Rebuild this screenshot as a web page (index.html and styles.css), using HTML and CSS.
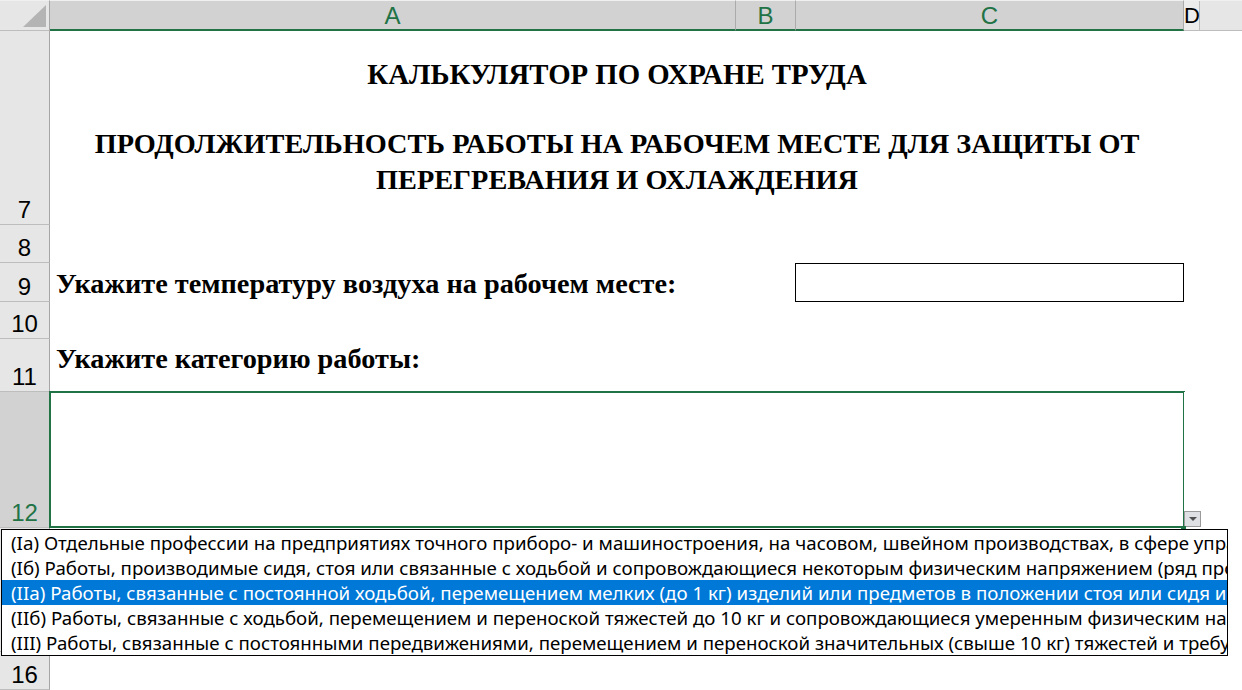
FILE: index.html
```html
<!DOCTYPE html>
<html lang="ru">
<head>
<meta charset="utf-8">
<title>Калькулятор по охране труда</title>
<link rel="stylesheet" href="styles.css">
</head>
<body>
<div class="sheet">
  <div class="hdr corner"><span class="corner-tri"></span></div>
  <div class="hdr col sel">A</div>
  <div class="hdr col sel">B</div>
  <div class="hdr col sel">C</div>
  <div class="hdr col d">D</div>
  <div class="hdr rest"></div>

  <div class="rh">7</div>
  <div class="cell span3 title-cell">
    <div class="title">КАЛЬКУЛЯТОР ПО ОХРАНЕ ТРУДА</div>
    <div class="subtitle">ПРОДОЛЖИТЕЛЬНОСТЬ РАБОТЫ НА РАБОЧЕМ МЕСТЕ ДЛЯ ЗАЩИТЫ ОТ<br>ПЕРЕГРЕВАНИЯ И ОХЛАЖДЕНИЯ</div>
  </div>
  <div class="cell span2"></div>

  <div class="rh">8</div>
  <div class="cell span5"></div>

  <div class="rh">9</div>
  <div class="cell span2 label label-9">Укажите температуру воздуха на рабочем месте:</div>
  <div class="cell input-cell"><div class="input-box"></div></div>
  <div class="cell span2"></div>

  <div class="rh">10</div>
  <div class="cell span5"></div>

  <div class="rh">11</div>
  <div class="cell span3 label label-11">Укажите категорию работы:</div>
  <div class="cell span2"></div>

  <div class="rh rh-sel">12</div>
  <div class="cell span3 selected"></div>
  <div class="cell span2"></div>

  <div class="rh"></div>
  <div class="cell span5"></div>

  <div class="rh">16</div>
  <div class="cell span5"></div>

  <div class="dd-btn"><span class="dd-tri"></span></div>
  <div class="fill-handle"></div>

  <div class="dd-list">
    <div class="dd-item">(Ia) Отдельные профессии на предприятиях точного приборо- и машиностроения, на часовом, швейном производствах, в сфере управления и т. п.</div>
    <div class="dd-item">(Iб) Работы, производимые сидя, стоя или связанные с ходьбой и сопровождающиеся некоторым физическим напряжением (ряд профессий в полиграфической промышленности)</div>
    <div class="dd-item active">(IIa) Работы, связанные с постоянной ходьбой, перемещением мелких (до 1 кг) изделий или предметов в положении стоя или сидя и требующие определённого физического напряжения</div>
    <div class="dd-item">(IIб) Работы, связанные с ходьбой, перемещением и переноской тяжестей до 10 кг и сопровождающиеся умеренным физическим напряжением</div>
    <div class="dd-item">(III) Работы, связанные с постоянными передвижениями, перемещением и переноской значительных (свыше 10 кг) тяжестей и требующие больших физических усилий</div>
  </div>
</div>
</body>
</html>
```

FILE: styles.css
```css
* { box-sizing: border-box; }
html, body { margin: 0; padding: 0; background: #fff; overflow: hidden; }

.sheet {
  position: relative;
  width: 1242px;
  height: 690px;
  display: grid;
  grid-template-columns: 50px 686px 60px 388px 20px 38px;
  grid-template-rows: 31px 194px 38px 39px 37px 53px 136px 124px 38px;
  font-family: "Liberation Sans", Arial, sans-serif;
}

.hdr {
  background: #e6e6e6;
  border-bottom: 1px solid #bdbdbd;
  border-right: 1px solid #bdbdbd;
  display: flex;
  align-items: center;
  justify-content: center;
  font-size: 24px;
  color: #000;
  border-top: 1px solid #f0f0f0;
}
.hdr.corner {
  position: relative;
  border-right: 1px solid #a6a6a6;
}
.corner-tri {
  position: absolute;
  right: 3px;
  bottom: 3px;
  width: 0;
  height: 0;
  border-left: 23px solid transparent;
  border-bottom: 22px solid #b4b4b4;
}
.hdr.sel {
  background: #d2d2d2;
  color: #217346;
  border-bottom: 2px solid #217346;
  border-right: 1px solid #ababab;
  padding-top: 1px;
}
.hdr.d {
  background: #ececec;
  border-right: none;
  box-shadow: inset -4px 0 0 #e6e6e6, inset -5px 0 0 #bdbdbd;
  justify-content: flex-start;
  font-size: 22px;
  padding-left: 0;
}
.hdr.rest { border-right: none; }

.rh {
  background: #e6e6e6;
  border-bottom: 1px solid #bdbdbd;
  border-right: 1px solid #a6a6a6;
  display: flex;
  align-items: flex-end;
  justify-content: center;
  font-size: 24px;
  line-height: 1;
  padding-bottom: 2px;
  color: #000;
}
.rh-sel {
  background: #d2d2d2;
  color: #217346;
}

.cell { background: #fff; }
.span2 { grid-column: span 2; }
.span3 { grid-column: span 3; }
.span5 { grid-column: span 5; }

.title-cell {
  text-align: center;
  font-family: "Liberation Serif", "Times New Roman", serif;
  font-weight: bold;
  color: #000;
  padding-top: 25px;
}
.title {
  font-size: 28.8px;
  line-height: 36px;
}
.subtitle {
  font-size: 28.3px;
  line-height: 36px;
  margin-top: 34px;
}

.label {
  font-family: "Liberation Serif", "Times New Roman", serif;
  font-weight: bold;
  font-size: 28.3px;
  color: #000;
  padding-left: 6px;
  white-space: nowrap;
}
.label-9 {
  display: flex;
  align-items: center;
  padding-top: 3px;
}
.label-11 {
  padding-top: 4px;
  line-height: 32px;
}

.input-cell { padding: 0 1px 1px 0; }
.input-box {
  height: 39px;
  width: 389px;
  margin-left: -1px;
  border: 1px solid #000;
}

.selected {
  border: 2px solid #217346;
  margin: -1px -1px 0 -1px;
}

.dd-btn {
  position: absolute;
  left: 1184px;
  top: 511px;
  width: 17px;
  height: 16px;
  background: #dfe0e3;
  border: 1px solid #9a9a9a;
  display: flex;
  align-items: center;
  justify-content: center;
}
.dd-tri {
  width: 0;
  height: 0;
  border-left: 4px solid transparent;
  border-right: 4px solid transparent;
  border-top: 4px solid #505050;
}
.fill-handle {
  position: absolute;
  left: 1181px;
  top: 526px;
  width: 5px;
  height: 3px;
  background: #217346;
}

.dd-list {
  position: absolute;
  left: 1px;
  top: 529px;
  width: 1227px;
  height: 127px;
  background: #fff;
  border: 1px solid #000;
  overflow: hidden;
  font-family: "Noto Sans", "Open Sans", sans-serif;
  font-size: 18.7px;
  color: #000;
}
.dd-item {
  height: 25px;
  line-height: 25px;
  padding-left: 9px;
  white-space: nowrap;
}
.dd-item.active {
  background: #0078d7;
  color: #fff;
}
```
